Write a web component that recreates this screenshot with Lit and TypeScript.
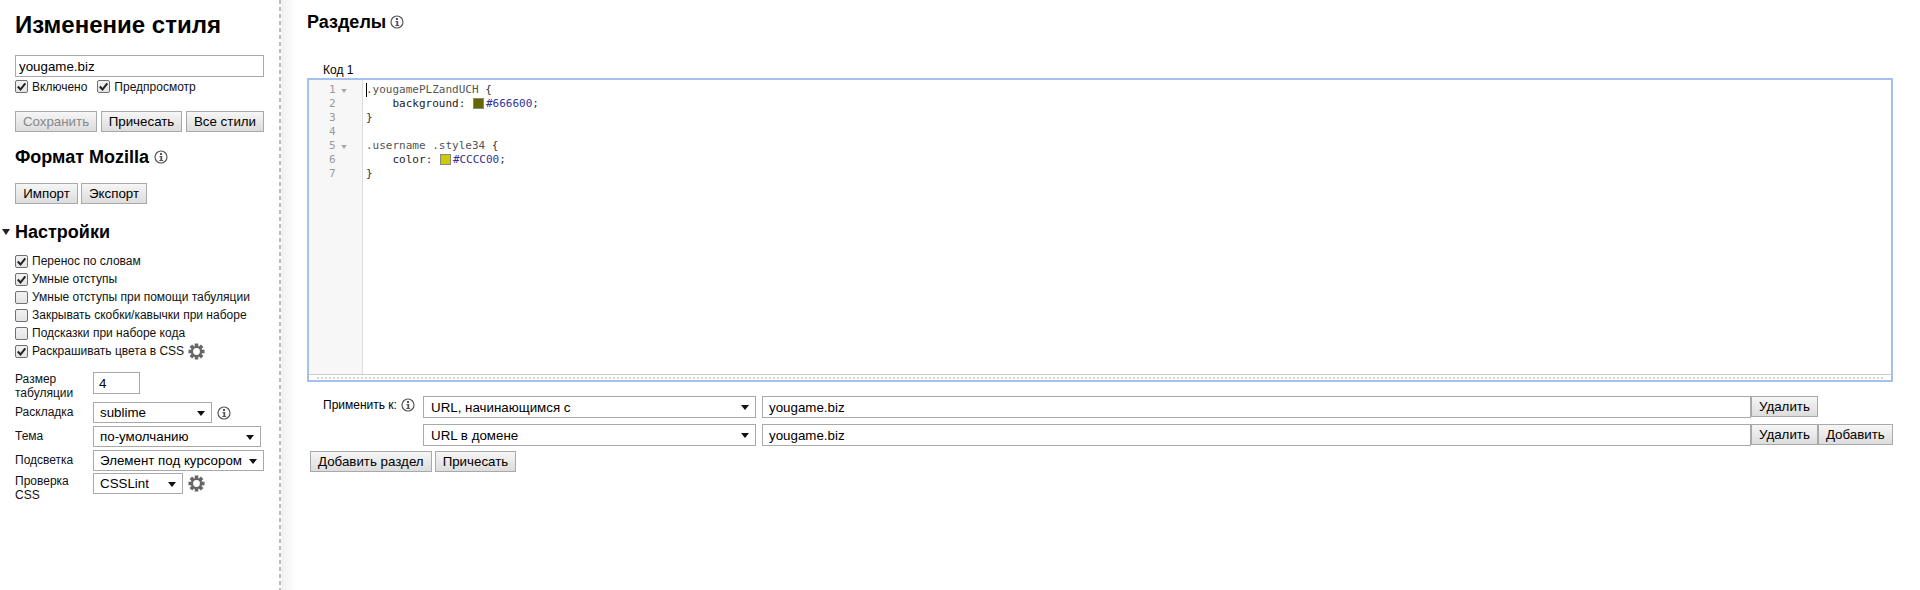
import { LitElement, html, css, svg } from "lit";
import { customElement } from "lit/decorators.js";

const info = html`<svg class="info" viewBox="0 0 14 14" width="14" height="14"><circle cx="7" cy="7" r="6" fill="none" stroke="#555" stroke-width="1.2"/><rect x="6" y="3" width="2" height="2" fill="#555"/><path d="M5.500 6h2.700v4h1v1H5.300v-1h1.100V7H5.500z" fill="#555"/></svg>`;
const teeth = [0, 45, 90, 135].map(
  (a) => svg`<rect x="6.700" y="0.500" width="3.600" height="16" fill="#666" transform="rotate(${a} 8.500 8.500)"/>`
);
const gear = html`<svg class="gear" viewBox="0 0 17 17" width="17" height="17">${teeth}<circle cx="8.500" cy="8.500" r="5.600" fill="#666"/><circle cx="8.500" cy="8.500" r="3.400" fill="#fff"/></svg>`;
const check = html`<svg viewBox="0 0 13 13" width="13" height="13"><path d="M2.800 6.500l2.700 3 4.800-6.200" fill="none" stroke="#222" stroke-width="2"/></svg>`;

const cb = (label: string, on: boolean) =>
  html`<label class="cb"><span class="box">${on ? check : ""}</span><span>${label}</span></label>`;
const sel = (text: string, cls: string) =>
  html`<span class="sel ${cls}"><select><option>${text}</option></select></span>`;

const code = [
  html`<span class="sel-t">.yougamePLZandUCH</span> {`,
  html`    <span class="p">background</span>: <i class="sw s1"></i><span class="c">#666600</span>;`,
  html`}`,
  html``,
  html`<span class="sel-t">.username .style34</span> {`,
  html`    <span class="p">color</span>: <i class="sw s2"></i><span class="c">#CCCC00</span>;`,
  html`}`,
];

@customElement("app-root")
export class AppRoot extends LitElement {
  static styles = css`
    :host { display: flex; width: 1920px; height: 590px; overflow: hidden; background: #fff; color: #000;
      font: 12px "Liberation Sans", Arial, sans-serif; }
    * { box-sizing: border-box; }
    button, input, select { font: 13.33px "Liberation Sans", Arial, sans-serif; color: #000; margin: 0; }
    aside { width: 281px; flex: none; height: 590px; padding: 0 17px 0 15px;
      background: repeating-linear-gradient(#bbb 0 4px, transparent 4px 7px) right / 2px 100% no-repeat; }
    h1 { font-size: 24px; line-height: 28px; margin: 11px 0 16px; font-weight: bold; }
    h2 { font-size: 18px; line-height: 20px; margin: 0; font-weight: bold; display: flex; align-items: center; gap: 5px; }
    .text { display: block; border: 1px solid #a9a9a9; height: 22px; padding: 0 3px; background: #fff; outline: none; }
    .name { width: 249px; }
    .row { display: flex; }
    .toggles { gap: 10px; margin-top: 2px; height: 15px; }
    .cb { display: flex; align-items: center; gap: 4px; height: 18px; color: #111; }
    .toggles .cb { height: 15px; }
    .box { width: 13px; height: 13px; border: 1px solid #707070; border-radius: 2px; flex: none; display: flex;
      background: linear-gradient(#f2f2f2, #e4e4e4); }
    .box svg { margin: -1px; }
    button { height: 21px; padding: 0; border: 1px solid #a9a9a9; background: linear-gradient(#f6f6f6, #dcdcdc); white-space: nowrap; }
    button:disabled { color: #888; }
    .actions { justify-content: space-between; margin-top: 17px; width: 249px; }
    .w82 { width: 82px; } .w81 { width: 81px; } .w78 { width: 78px; } .w63 { width: 63px; } .w66 { width: 66px; }
    .moz { margin-top: 15px; }
    .io { gap: 3px; margin-top: 16px; }
    .settings { position: relative; margin-top: 17px; line-height: 22px; }
    .tri { position: absolute; left: -13px; top: 8px; width: 0; height: 0; border: 4px solid transparent; border-top: 6px solid #222; border-bottom: 0; }
    .list { margin-top: 9px; }
    .gearrow { gap: 4px; align-items: center; display: flex; }
    .opts { display: grid; grid-template-columns: 78px auto; margin-top: 12px; row-gap: 3px; line-height: 14px; color: #111; }
    .opts > div { display: flex; align-items: flex-start; gap: 5px; }
    .opts .l { padding-top: 3px; }
    .opts .two { padding-top: 0; }
    .opts .first { margin-bottom: -1px; }
    .opts .last { margin-top: -1px; }
    .opts .info { margin-top: 4px; }
    .opts .gear { margin-top: 2px; }
    .tab { width: 47px; height: 22px; padding: 0 5px; }
    .sel { position: relative; display: inline-block; flex: none; height: 21px; }
    .sel select { appearance: none; display: block; width: 100%; height: 100%; border: 1px solid #a9a9a9; background: #fff; padding: 0 6px; border-radius: 0; outline: none; }
    .sel::after { content: ""; position: absolute; right: 7px; top: 9px; border: 4px solid transparent; border-top: 5px solid #111; border-bottom: 0; }
    .s119 { width: 119px; } .s168 { width: 168px; } .s171 { width: 171px; } .s90 { width: 90px; }
    main { flex: 1; min-width: 0; position: relative; padding: 12px 26px 0 26px;
      background: linear-gradient(90deg, #f1f1f1, #fff 16px); }
    main > h2 { gap: 4px; }
    .tab-name { margin: 31px 0 0 16px; height: 15px; line-height: 15px; }
    .ed { height: 304px; width: 1586px; border: 2px solid #a4c0ef; display: flex; flex-direction: column; }
    .body { flex: 1; display: flex; min-height: 0; padding-top: 3px; }
    .gut { width: 54px; flex: none; background: #f7f7f7; border-right: 1px solid #ddd; margin-top: -3px; padding-top: 3px; color: #999;
      font: 11px/14px "DejaVu Sans Mono", monospace; }
    .gut div { height: 14px; padding-left: 20px; position: relative; }
    .fold::after { content: ""; position: absolute; left: 32px; top: 6px; border: 3px solid transparent; border-top: 4px solid #aaa; border-bottom: 0; }
    .lines { flex: 1; font: 11px/14px "DejaVu Sans Mono", monospace; color: #333; white-space: pre; padding-left: 3px; position: relative; }
    .ln { height: 14px; }
    .ln:first-child { background: #e8f2ff; margin-left: -3px; padding-left: 3px; }
    .caret { position: absolute; left: 3px; top: 0; width: 1px; height: 14px; background: #000; }
    .sel-t { color: #555; } .p { color: #222; } .c { color: #31319c; }
    .sw { display: inline-block; width: 11px; height: 11px; border: 1px solid #888; vertical-align: -2px; margin: 0 2px 0 1px; }
    .s1 { background: #666600; } .s2 { background: #cccc00; }
    .bar { height: 6px; border-top: 1px solid #ccc; flex: none; position: relative; }
    .bar::after { content: ""; position: absolute; left: 8px; right: 8px; top: 2px; border-top: 2px dotted #d8d8d8; }
    .apply { display: grid; grid-template-columns: 116px 333px 995px auto; row-gap: 6px; margin-top: 14px; justify-content: start; }
    .applylabel { padding-left: 16px; display: flex; align-items: flex-start; gap: 4px; padding-top: 2px; }
    .apply .sel { width: 333px; height: 22px; }
    .apply .sel select { padding: 0 7px; }
    .apply .url { width: 989px; margin-left: 6px; padding: 0 6px; }
    .btns { display: flex; }
    .apply button { padding: 0 7px; }
    .add { gap: 3px; margin: 5px 0 0 3px; }
    .add button { padding: 0 7px; }
    .info { flex: none; }
  `;

  render() {
    return html`
      <aside>
        <h1>Изменение стиля</h1>
        <input class="text name" .value=${"yougame.biz"} />
        <div class="row toggles">${cb("Включено", true)}${cb("Предпросмотр", true)}</div>
        <div class="row actions">
          <button class="w82" disabled>Сохранить</button><button class="w81">Причесать</button><button class="w78">Все стили</button>
        </div>
        <h2 class="moz">Формат Mozilla ${info}</h2>
        <div class="row io"><button class="w63">Импорт</button><button class="w66">Экспорт</button></div>
        <h2 class="settings"><span class="tri"></span>Настройки</h2>
        <div class="list">
          ${cb("Перенос по словам", true)}
          ${cb("Умные отступы", true)}
          ${cb("Умные отступы при помощи табуляции", false)}
          ${cb("Закрывать скобки/кавычки при наборе", false)}
          ${cb("Подсказки при наборе кода", false)}
          <div class="gearrow">${cb("Раскрашивать цвета в CSS", true)}${gear}</div>
        </div>
        <div class="opts">
          <div class="l two first">Размер табуляции</div><div><input class="text tab" .value=${"4"} /></div>
          <div class="l">Раскладка</div><div>${sel("sublime", "s119")}${info}</div>
          <div class="l">Тема</div><div>${sel("по-умолчанию", "s168")}</div>
          <div class="l">Подсветка</div><div>${sel("Элемент под курсором", "s171")}</div>
          <div class="l two">Проверка CSS</div><div class="last">${sel("CSSLint", "s90")}${gear}</div>
        </div>
      </aside>
      <main>
        <h2>Разделы ${info}</h2>
        <div class="tab-name">Код 1</div>
        <div class="ed">
          <div class="body">
            <div class="gut">
              ${code.map((_, i) => html`<div class=${i === 0 || i === 4 ? "fold" : ""}>${i + 1}</div>`)}
            </div>
            <div class="lines"><i class="caret"></i>${code.map((l) => html`<div class="ln">${l}</div>`)}</div>
          </div>
          <div class="bar"></div>
        </div>
        <div class="apply">
          <div class="applylabel"><span>Применить к:</span>${info}</div>
          ${sel("URL, начинающимся с", "")}
          <input class="text url" .value=${"yougame.biz"} />
          <div class="btns"><button>Удалить</button></div>
          <div></div>
          ${sel("URL в домене", "")}
          <input class="text url" .value=${"yougame.biz"} />
          <div class="btns"><button>Удалить</button><button>Добавить</button></div>
        </div>
        <div class="row add"><button>Добавить раздел</button><button>Причесать</button></div>
      </main>
    `;
  }
}
